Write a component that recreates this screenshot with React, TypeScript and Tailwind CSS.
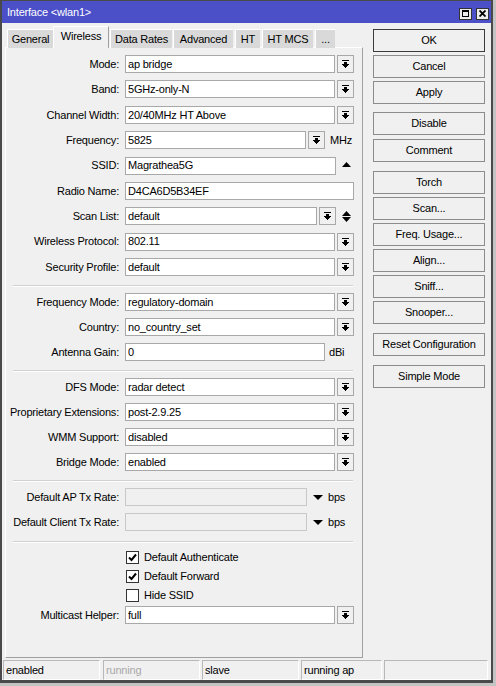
import React from "react";

const DropIcon = () => (
  <svg width="7" height="8" viewBox="0 0 7 8" shapeRendering="crispEdges">
    <rect x="0" y="0" width="7" height="1" fill="#000" />
    <rect x="2" y="2" width="3" height="2" fill="#000" />
    <path d="M0 4H7L3.5 7.6Z" fill="#000" />
  </svg>
);

const DropBtn = () => (
  <div className="ml-[2px] flex h-[18px] w-[17px] shrink-0 items-center justify-center border border-[#a8a8a8] bg-[#f0f0f0]">
    <DropIcon />
  </div>
);

const Field = ({ value, w, disabled }: { value?: string; w: string; disabled?: boolean }) => (
  <div
    className={`flex h-[18px] shrink-0 items-center overflow-hidden whitespace-nowrap border pl-[2px] ${w} ${
      disabled ? "border-[#c8c8c8] bg-[#f0f0f0]" : "border-[#a8a8a8] bg-white"
    }`}
  >
    {value}
  </div>
);

const Row = ({ label, children }: { label: string; children: React.ReactNode }) => (
  <div className="flex h-[18px] items-center">
    <div className="w-[113px] shrink-0 whitespace-nowrap text-right">{label}</div>
    <div className="ml-[6px] flex items-center">{children}</div>
  </div>
);

const Sep = () => (
  <div className="ml-[7px] mt-[9px] mb-[6px] w-[340px] border-t border-b border-t-[#d0d0d0] border-b-white" />
);

const Up = () => (
  <svg width="9" height="5" viewBox="0 0 9 5">
    <path d="M0 5H9L4.5 0Z" fill="#000" />
  </svg>
);
const Down = ({ w = 9 }: { w?: number }) => (
  <svg width={w} height="5" viewBox={`0 0 ${w} 5`}>
    <path d={`M0 0H${w}L${w / 2} 5Z`} fill="#000" />
  </svg>
);

const Check = ({ checked, label }: { checked: boolean; label: string }) => (
  <div className="flex h-[19px] items-center">
    <div className="ml-[120px] flex h-[13px] w-[13px] items-center justify-center border border-[#333] bg-white">
      {checked && (
        <svg width="9" height="9" viewBox="0 0 9 9">
          <path d="M1 4.5L3.5 7L8 1.5" stroke="#000" strokeWidth="2" fill="none" />
        </svg>
      )}
    </div>
    <span className="ml-[5px]">{label}</span>
  </div>
);

const Btn = ({ label, def, cls = "" }: { label: string; def?: boolean; cls?: string }) => (
  <div
    className={`flex h-[23px] w-[112px] items-center justify-center border bg-[#f0f0f0] ${
      def ? "border-[#3c3c3c]" : "border-[#8c8c8c]"
    } ${cls}`}
  >
    {label}
  </div>
);

const Tab = ({ label, w, cls = "" }: { label: string; w: string; cls?: string }) => (
  <div
    className={`flex h-[19px] items-center justify-center border-l border-t border-l-white border-t-white bg-[#d9d9d9] ${w} ${cls}`}
  >
    {label}
  </div>
);

const Status = ({ text, w, cls = "", gray }: { text: string; w: string; cls?: string; gray?: boolean }) => (
  <div
    className={`flex h-[20px] items-center border border-t-[#b8b8b8] border-l-[#b8b8b8] border-b-white border-r-white pl-[2px] ${w} ${cls} ${
      gray ? "text-[#a8a8a8]" : "text-black"
    }`}
  >
    {text}
  </div>
);

export default function App() {
  return (
    <div className="h-[686px] w-[496px] bg-[#c4c4c4] font-['Liberation_Sans',Arial,sans-serif] text-[11px] tracking-[-0.2px] text-black">
      <div className="flex h-[683px] w-[493px] flex-col border-x-2 border-b-[3px] border-t border-[#4a4a4a] bg-[#f0f0f0]">
        {/* title bar */}
        <div className="flex h-[22px] shrink-0 items-center bg-[#4b4fc8] pl-[5px] pr-[2px]">
          <span className="text-white">Interface &lt;wlan1&gt;</span>
          <div className="ml-auto mt-[3px] flex gap-[4px]">
            <div className="flex h-[12px] w-[13px] items-center justify-center border border-[#333] bg-[#ececec]">
              <div className="h-[7px] w-[7px] border border-t-2 border-black" />
            </div>
            <div className="flex h-[12px] w-[13px] items-center justify-center border border-[#333] bg-[#ececec]">
              <svg width="7" height="7" viewBox="0 0 7 7">
                <path d="M0.5 0.5L6.5 6.5M6.5 0.5L0.5 6.5" stroke="#000" strokeWidth="1.8" />
              </svg>
            </div>
          </div>
        </div>

        {/* body */}
        <div className="flex flex-1 flex-col">
          <div className="flex">
            {/* left */}
            <div className="ml-[3px] mt-[3px] flex flex-col">
              <div className="relative z-10 flex h-[22px] items-end">
                <Tab label="General" w="w-[46px]" cls="ml-[2px]" />
                <div className="flex h-[22px] w-[56px] items-center justify-center border-l border-r border-t border-l-white border-t-white border-r-[#a0a0a0] bg-[#f0f0f0] pb-[2px]">
                  Wireless
                </div>
                <Tab label="Data Rates" w="w-[62px]" cls="ml-[1px]" />
                <Tab label="Advanced" w="w-[60px]" cls="ml-[1px]" />
                <Tab label="HT" w="w-[25px]" cls="ml-[2px]" />
                <Tab label="HT MCS" w="w-[51px]" cls="ml-[2px]" />
                <Tab label="..." w="w-[20px]" cls="ml-[2px]" />
              </div>
              <div className="-mt-px flex h-[611px] w-[358px] flex-col border border-b-[#a0a0a0] border-l-white border-r-[#a0a0a0] border-t-white pt-[7px]">
                <div className="flex flex-col gap-[7.375px]">
                  <Row label="Mode:">
                    <Field value="ap bridge" w="w-[210px]" />
                    <DropBtn />
                  </Row>
                  <Row label="Band:">
                    <Field value="5GHz-only-N" w="w-[210px]" />
                    <DropBtn />
                  </Row>
                  <Row label="Channel Width:">
                    <Field value="20/40MHz HT Above" w="w-[210px]" />
                    <DropBtn />
                  </Row>
                  <Row label="Frequency:">
                    <Field value="5825" w="w-[181px]" />
                    <DropBtn />
                    <span className="ml-[5px]">MHz</span>
                  </Row>
                  <Row label="SSID:">
                    <Field value="Magrathea5G" w="w-[211px]" />
                    <span className="ml-[6px] mb-[2px]">
                      <Up />
                    </span>
                  </Row>
                  <Row label="Radio Name:">
                    <Field value="D4CA6D5B34EF" w="w-[229px]" />
                  </Row>
                  <Row label="Scan List:">
                    <Field value="default" w="w-[192px]" />
                    <DropBtn />
                    <div className="ml-[6px] flex flex-col gap-[1px]">
                      <Up />
                      <Down />
                    </div>
                  </Row>
                  <Row label="Wireless Protocol:">
                    <Field value="802.11" w="w-[210px]" />
                    <DropBtn />
                  </Row>
                  <Row label="Security Profile:">
                    <Field value="default" w="w-[210px]" />
                    <DropBtn />
                  </Row>
                </div>
                <Sep />
                <div className="flex flex-col gap-[7px]">
                  <Row label="Frequency Mode:">
                    <Field value="regulatory-domain" w="w-[210px]" />
                    <DropBtn />
                  </Row>
                  <Row label="Country:">
                    <Field value="no_country_set" w="w-[210px]" />
                    <DropBtn />
                  </Row>
                  <Row label="Antenna Gain:">
                    <Field value="0" w="w-[200px]" />
                    <span className="ml-[4px]">dBi</span>
                  </Row>
                </div>
                <Sep />
                <div className="flex flex-col gap-[7px]">
                  <Row label="DFS Mode:">
                    <Field value="radar detect" w="w-[210px]" />
                    <DropBtn />
                  </Row>
                  <Row label="Proprietary Extensions:">
                    <Field value="post-2.9.25" w="w-[210px]" />
                    <DropBtn />
                  </Row>
                  <Row label="WMM Support:">
                    <Field value="disabled" w="w-[210px]" />
                    <DropBtn />
                  </Row>
                  <Row label="Bridge Mode:">
                    <Field value="enabled" w="w-[210px]" />
                    <DropBtn />
                  </Row>
                </div>
                <Sep />
                <div className="flex flex-col gap-[7px]">
                  <Row label="Default AP Tx Rate:">
                    <Field w="w-[182px]" disabled />
                    <span className="ml-[6px]">
                      <Down w={10} />
                    </span>
                    <span className="ml-[5px]">bps</span>
                  </Row>
                  <Row label="Default Client Tx Rate:">
                    <Field w="w-[182px]" disabled />
                    <span className="ml-[6px]">
                      <Down w={10} />
                    </span>
                    <span className="ml-[5px]">bps</span>
                  </Row>
                </div>
                <div className="ml-[7px] mt-[10px] w-[340px] border-t border-b border-t-[#d0d0d0] border-b-white" />
                <div className="mt-[5px] flex flex-col">
                  <Check checked label="Default Authenticate" />
                  <Check checked label="Default Forward" />
                  <Check checked={false} label="Hide SSID" />
                </div>
                <div className="mt-[1px]">
                  <Row label="Multicast Helper:">
                    <Field value="full" w="w-[210px]" />
                    <DropBtn />
                  </Row>
                </div>
              </div>
            </div>

            {/* right buttons */}
            <div className="ml-[10px] mt-[6px] flex flex-col">
              <div className="flex flex-col gap-[3px]">
                <Btn label="OK" def />
                <Btn label="Cancel" />
                <Btn label="Apply" />
              </div>
              <div className="mt-[8px] flex flex-col gap-[4px]">
                <Btn label="Disable" />
                <Btn label="Comment" />
              </div>
              <div className="mt-[9px] flex flex-col gap-[3px]">
                <Btn label="Torch" />
                <Btn label="Scan..." />
                <Btn label="Freq. Usage..." />
                <Btn label="Align..." />
                <Btn label="Sniff..." />
                <Btn label="Snooper..." />
              </div>
              <Btn label="Reset Configuration" cls="mt-[9px]" />
              <Btn label="Simple Mode" cls="mt-[9px]" />
            </div>
          </div>

          {/* status bar */}
          <div className="ml-[1px] mt-[2px] flex">
            <Status text="enabled" w="w-[97px]" />
            <Status text="running" w="w-[97px]" cls="ml-[3px]" gray />
            <Status text="slave" w="w-[97px]" cls="ml-[2px]" />
            <Status text="running ap" w="w-[81px]" cls="ml-[2px]" />
            <Status text="" w="w-[104px]" cls="ml-[2px]" />
          </div>
        </div>
      </div>
    </div>
  );
}
